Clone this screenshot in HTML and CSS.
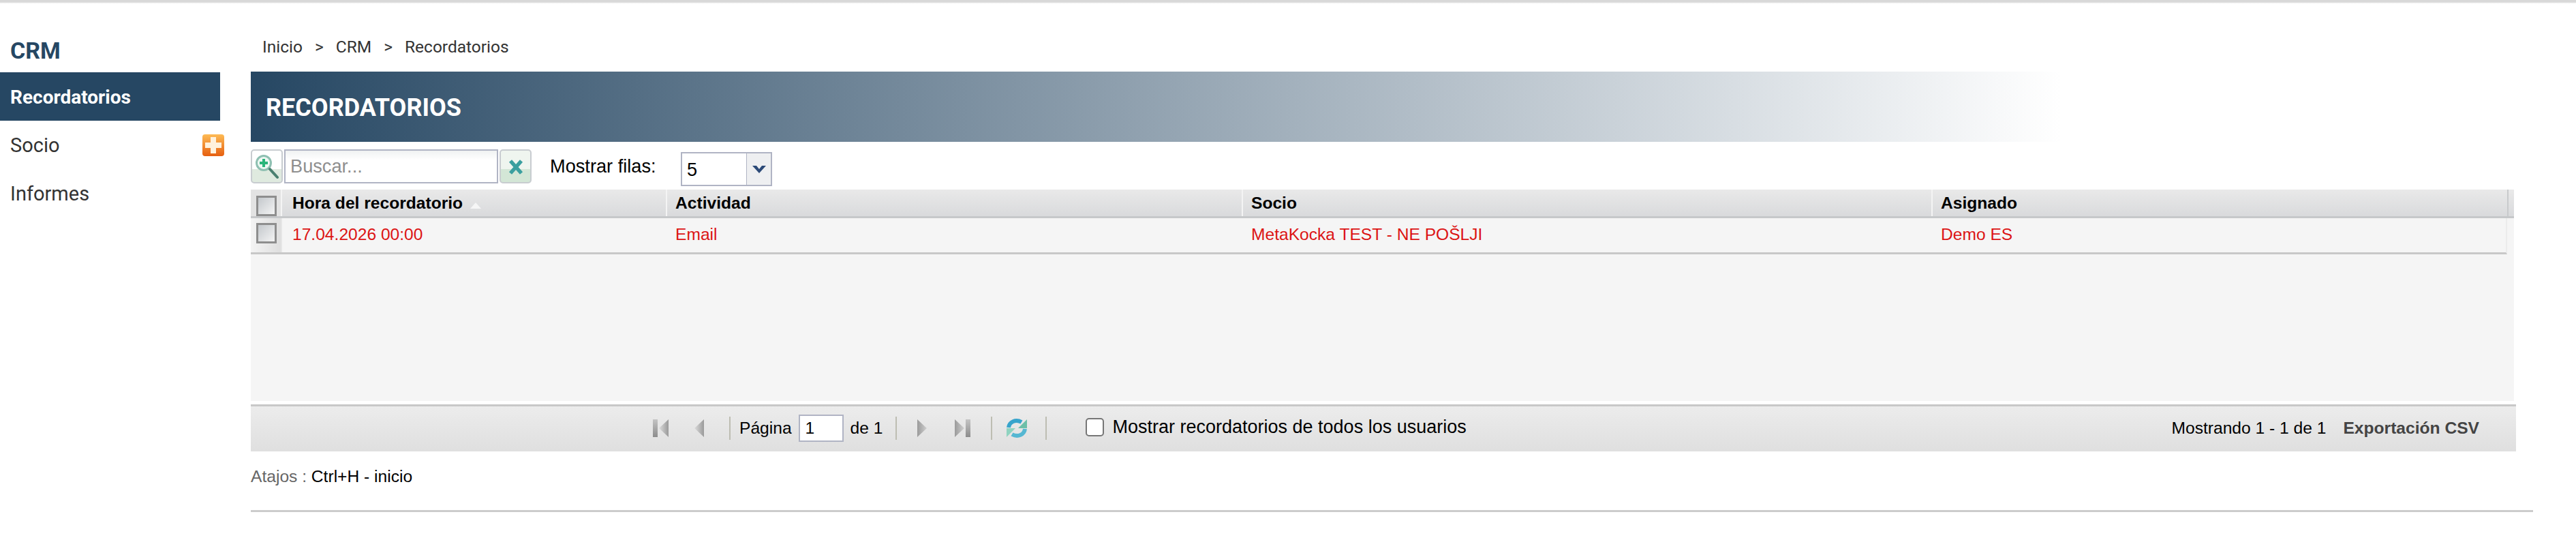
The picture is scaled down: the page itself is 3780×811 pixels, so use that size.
FILE: index.html
```html
<!DOCTYPE html>
<html lang="es">

<head>
  <meta charset="UTF-8">
  <title>Recordatorios</title>
  <link rel="stylesheet" href="styles.css">
</head>

<body>
  <div class="topline"></div>

  <div class="page">
    <aside class="sidebar">
      <h2 class="sidebar__title">CRM</h2>
      <ul class="sidebar__list">
        <li class="sidebar__item sidebar__item--active">Recordatorios</li>
        <li class="sidebar__item">
          Socio
          <span class="sidebar__add">
            <svg viewBox="0 0 32 32" width="32" height="32">
              <defs>
                <linearGradient id="addFill" x1="0" y1="0" x2="0" y2="1">
                  <stop offset="0" stop-color="#fdbb55"/>
                  <stop offset="1" stop-color="#e65f10"/>
                </linearGradient>
              </defs>
              <rect x="0" y="0" width="32" height="32" rx="4" fill="url(#addFill)"/>
              <path d="M12 4h8v8h8v8h-8v8h-8v-8H4v-8h8z" fill="#fff1dc"/>
            </svg>
          </span>
        </li>
        <li class="sidebar__item">Informes</li>
      </ul>
    </aside>

    <main class="content">
      <div class="breadcrumb">
        <span>Inicio</span><span class="breadcrumb__sep">&gt;</span><span>CRM</span><span class="breadcrumb__sep">&gt;</span><span>Recordatorios</span>
      </div>

      <h1 class="heading">RECORDATORIOS</h1>

      <div class="filters">
        <div class="search">
          <span class="search__btn">
            <svg viewBox="0 0 47 50" width="47" height="50">
              <circle cx="19" cy="20" r="10.5" fill="#eef8f3" stroke="#8fc0b2" stroke-width="3"/>
              <path d="M19 14v12M13 20h12" stroke="#2ab57a" stroke-width="4"/>
              <path d="M28 29l11 12" stroke="#4a8070" stroke-width="4" stroke-linecap="round"/>
            </svg>
          </span>
          <input class="search__input" type="text" placeholder="Buscar...">
          <span class="search__btn search__btn--clear">
            <svg viewBox="0 0 48 50" width="48" height="50">
              <path d="M16 17l16 18M32 17L16 35" stroke="#3a9f9f" stroke-width="5.5"/>
            </svg>
          </span>
        </div>
        <span class="filters__label">Mostrar filas:</span>
        <div class="rows-select">
          <span class="rows-select__value">5</span>
          <span class="rows-select__arrow">
            <svg viewBox="0 0 20 14" width="20" height="14">
              <path d="M0 2h6l4 5 4-5h6l-10 11z" fill="#2c4a78"/>
            </svg>
          </span>
        </div>
      </div>

      <div class="grid">
        <div class="grid__head">
          <div class="grid__cell grid__cell--check"><span class="check"></span></div>
          <div class="grid__cell grid__cell--time">Hora del recordatorio <span class="sort-arrow"></span></div>
          <div class="grid__cell grid__cell--type">Actividad</div>
          <div class="grid__cell grid__cell--partner">Socio</div>
          <div class="grid__cell grid__cell--user">Asignado</div>
        </div>
        <div class="grid__body">
          <div class="grid__row">
            <div class="grid__cell grid__cell--check"><span class="check"></span></div>
            <div class="grid__cell grid__cell--time">17.04.2026 00:00</div>
            <div class="grid__cell grid__cell--type">Email</div>
            <div class="grid__cell grid__cell--partner">MetaKocka TEST - NE POŠLJI</div>
            <div class="grid__cell grid__cell--user">Demo ES</div>
          </div>
        </div>
      </div>

      <div class="pager">
        <div class="pager__nav">
          <svg class="pager__icon" viewBox="0 0 24 26" width="24" height="26">
            <defs>
              <linearGradient id="barFill" x1="0" y1="0" x2="0" y2="1">
                <stop offset="0" stop-color="#c4c4c4"/>
                <stop offset="1" stop-color="#8c8c8c"/>
              </linearGradient>
              <linearGradient id="arrowFill" x1="0" y1="0" x2="1" y2="0">
                <stop offset="0" stop-color="#dcdcdc"/>
                <stop offset="1" stop-color="#9a9a9a"/>
              </linearGradient>
              <linearGradient id="arrowFillNext" x1="0" y1="0" x2="1" y2="0">
                <stop offset="0" stop-color="#9a9a9a"/>
                <stop offset="1" stop-color="#cfcfcf"/>
              </linearGradient>
            </defs>
            <rect x="0" y="0" width="7" height="26" fill="url(#barFill)"/>
            <path d="M23 0v26L9 13z" fill="url(#arrowFill)"/>
          </svg>
          <svg class="pager__icon pager__icon--prev" viewBox="0 0 14 26" width="14" height="26">
            <path d="M14 0v26L0 13z" fill="url(#arrowFill)"/>
          </svg>
          <span class="pager__sep pager__sep--first"></span>
          <span class="pager__text">Página</span>
          <input class="pager__input" type="text" value="1">
          <span class="pager__text">de 1</span>
          <span class="pager__sep pager__sep--second"></span>
          <svg class="pager__icon pager__icon--next" viewBox="0 0 14 26" width="14" height="26">
            <path d="M0 0v26l14-13z" fill="url(#arrowFillNext)"/>
          </svg>
          <svg class="pager__icon pager__icon--last" viewBox="0 0 23 26" width="23" height="26">
            <path d="M0 0v26l14-13z" fill="url(#arrowFillNext)"/>
            <rect x="16" y="0" width="7" height="26" fill="url(#barFill)"/>
          </svg>
          <span class="pager__sep pager__sep--third"></span>
          <svg class="pager__icon pager__icon--refresh" viewBox="0 0 32 32" width="32" height="32">
            <path d="M4 15C5 7 14 2 23 7" fill="none" stroke="#37a4cc" stroke-width="6"/>
            <path d="M31 3v13H18z" fill="#6cbfa8"/>
            <path d="M28 17C27 25 18 30 9 25" fill="none" stroke="#55b7d2" stroke-width="6"/>
            <path d="M1 29V16h13z" fill="#8fd3c0"/>
          </svg>
          <span class="pager__sep pager__sep--fourth"></span>
          <label class="pager__all"><input class="pager__checkbox" type="checkbox"> Mostrar recordatorios de todos los usuarios</label>
        </div>
        <div class="pager__info">
          <span>Mostrando 1 - 1 de 1</span>
          <a class="pager__export" href="#">Exportación CSV</a>
        </div>
      </div>

      <p class="shortcuts">Atajos : <span class="shortcuts__keys">Ctrl+H - inicio</span></p>
      <hr class="rule">
    </main>
  </div>
</body>

</html>
```

FILE: styles.css
```css
*,
*:after,
*:before {
  margin: 0;
  padding: 0;
  box-sizing: border-box;
}

body {
  font-family: "Liberation Sans", Arial, sans-serif;
  background: #fff;
  color: #000;
  overflow: hidden;
}

.topline {
  height: 5px;
  background: linear-gradient(#d8d8d8 60%, #fafafa);
}

.page {
  display: flex;
  gap: 45px;
  padding-right: 91px;
}

/* sidebar */
.sidebar {
  width: 323px;
  flex-shrink: 0;
  font-family: Roboto, sans-serif;
}

.sidebar__title {
  font-size: 34px;
  font-weight: 700;
  line-height: 38px;
  color: #264763;
  padding: 50px 0 13px 15px;
  height: 101px;
}

.sidebar__list {
  list-style: none;
}

.sidebar__item {
  position: relative;
  height: 71px;
  line-height: 72px;
  padding-left: 15px;
  font-size: 29px;
  color: #333;
}

.sidebar__item--active {
  background: #264763;
  color: #fff;
  font-size: 28px;
  font-weight: 700;
  line-height: 73px;
}

.sidebar__add {
  position: absolute;
  left: 297px;
  top: 20px;
  width: 32px;
  height: 32px;
}

.sidebar__add svg {
  display: block;
}

/* main column */
.content {
  flex: 1;
  min-width: 0;
}

.breadcrumb {
  display: flex;
  height: 100px;
  padding: 49px 0 0 17px;
  font-family: Roboto, sans-serif;
  font-size: 24.5px;
  line-height: 30px;
  color: #333;
}

.breadcrumb__sep {
  margin: 0 18px;
}

.heading {
  height: 103px;
  line-height: 107px;
  padding-left: 22px;
  font-family: Roboto, sans-serif;
  font-size: 36px;
  font-weight: 700;
  color: #fff;
  background: linear-gradient(to right, #264763, #fff 80%);
}

.filters {
  display: flex;
  align-items: flex-start;
  height: 70px;
  padding-top: 11px;
}

.search {
  display: flex;
  gap: 2px;
  width: 413px;
}

.search__btn {
  display: block;
  width: 47px;
  height: 50px;
  border: 2px solid #c8ccd0;
  border-radius: 5px;
  background: linear-gradient(#fff 58%, #dfeadf 58%);
  overflow: hidden;
}

.search__btn--clear {
  background: linear-gradient(#eff5ef 58%, #d3e6d6 58%);
}

.search__btn svg {
  display: block;
  margin: -2px;
}

.search__input {
  width: 314px;
  height: 50px;
  padding: 0 7px;
  border: 2px solid #b0b4c4;
  font: 27.2px "Liberation Sans", Arial, sans-serif;
  background: linear-gradient(#f0f2f2, #fff 30%);
  outline: none;
}

.search__input::placeholder {
  color: #8f8f8f;
  opacity: 1;
}

.filters__label {
  margin: 9px 0 0 26px;
  width: 192px;
  font-size: 27.2px;
  line-height: 32px;
}

.rows-select {
  display: flex;
  width: 134px;
  height: 50px;
  margin-top: 4px;
  border: 2px solid #b0b4c4;
  background: #fff;
}

.rows-select__value {
  width: 94px;
  padding-left: 7px;
  font-size: 27.2px;
  line-height: 48px;
}

.rows-select__arrow {
  display: flex;
  flex: 1;
  align-items: center;
  justify-content: center;
  border-left: 1px solid #b0b4c4;
  background: #eeeff1;
}

/* table */
.grid {
  font-size: 24.6px;
}

.grid__head {
  display: flex;
  height: 42px;
  border-bottom: 3px solid #c6c8ca;
  background: linear-gradient(#e9e9e9, #d9dadc);
  font-weight: bold;
  line-height: 40px;
}

.grid__head .grid__cell {
  border-right: 2px solid #f4f4f4;
}

.grid__head .grid__cell--user {
  border-right: 2px solid #c8cacc;
}

.grid__body {
  height: 268px;
  background: #f5f5f5;
}

.grid__row {
  display: flex;
  width: 3311px;
  height: 53px;
  border-bottom: 3px solid #c8c8c8;
  border-right: 2px solid #ececec;
  color: #dc1414;
  line-height: 48px;
}

.grid__cell {
  flex-shrink: 0;
  padding-left: 12px;
  white-space: nowrap;
}

.grid__cell--check {
  width: 46px;
  padding: 7px 0 0 8px;
  border-right: 2px solid #e6e6e6;
  background: linear-gradient(to right, #f4f4f4, #dedede);
}

.grid__head .grid__cell--check {
  padding-top: 9px;
  background: #e3e3e3;
}

.grid__cell--time {
  width: 565px;
  padding-left: 15px;
}

.grid__cell--type {
  width: 845px;
}

.grid__cell--partner {
  width: 1012px;
}

.grid__cell--user {
  width: 845px;
}

.check {
  display: block;
  width: 30px;
  height: 30px;
  border: 3px solid #8e8e8e;
  background: linear-gradient(135deg, #c4c8cc, #f4f4f4);
}

.sort-arrow {
  display: inline-block;
  margin-left: 4px;
  border-left: 8px solid transparent;
  border-right: 8px solid transparent;
  border-bottom: 9px solid #f6f6f6;
}

/* pager */
.pager {
  display: flex;
  align-items: center;
  justify-content: space-between;
  height: 69px;
  margin: 5px -3px 0 0;
  padding: 0 54px 3px 590px;
  border-top: 3px solid #c8c8c8;
  background: linear-gradient(#ececec, #dfdfdf);
  font-size: 24.6px;
}

.pager__nav {
  display: flex;
  align-items: center;
}

.pager__icon {
  flex-shrink: 0;
}

.pager__icon--prev {
  margin-left: 37px;
}

.pager__sep {
  width: 2px;
  height: 34px;
  background: #bdbdb2;
}

.pager__sep--first {
  margin: 0 13px 0 37px;
}

.pager__text {
  white-space: nowrap;
}

.pager__input {
  width: 66px;
  height: 40px;
  margin: 0 10px;
  padding-left: 8px;
  border: 2px solid #b0b4c4;
  background: #fff;
  font: 24.6px "Liberation Sans", Arial, sans-serif;
}

.pager__sep--second {
  margin-left: 19px;
}

.pager__icon--next {
  margin-left: 30px;
}

.pager__icon--last {
  margin-left: 41px;
}

.pager__sep--third {
  margin-left: 30px;
}

.pager__icon--refresh {
  margin-left: 20px;
}

.pager__sep--fourth {
  margin-left: 26px;
}

.pager__all {
  display: flex;
  align-items: center;
  gap: 12px;
  margin: 0 0 3px 57px;
  font-size: 27px;
  white-space: nowrap;
}

.pager__checkbox {
  appearance: none;
  width: 27px;
  height: 27px;
  border: 2px solid #767676;
  border-radius: 5px;
  background: #fff;
}

.pager__info {
  display: flex;
  gap: 25px;
}

.pager__export {
  color: #444;
  font-weight: bold;
  text-decoration: none;
}

.shortcuts {
  margin-top: 22px;
  font-size: 24.6px;
  line-height: 30px;
  color: #666;
}

.shortcuts__keys {
  color: #000;
}

.rule {
  height: 3px;
  margin: 34px -28px 0 0;
  border: 0;
  background: #ccc;
}
```
